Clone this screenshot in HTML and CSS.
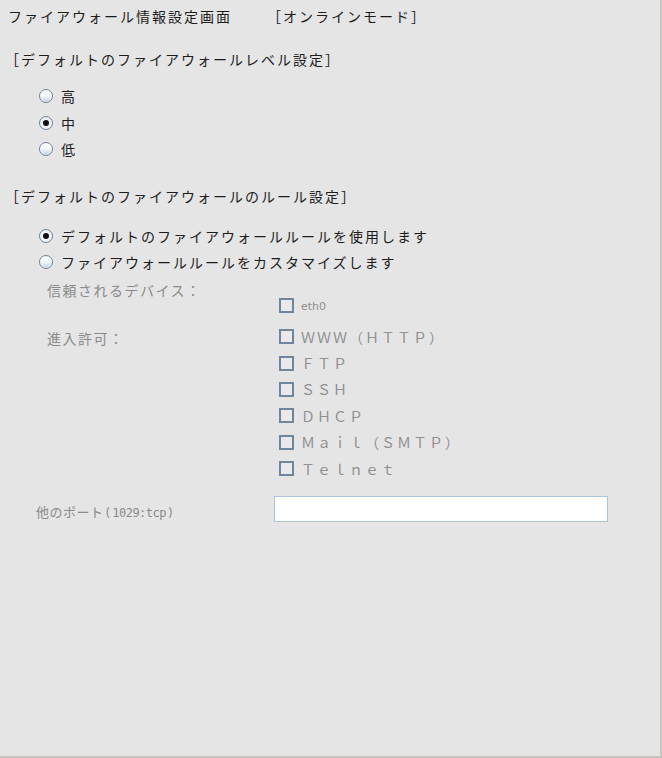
FILE: index.html
```html
<!DOCTYPE html>
<html lang="ja">
<head>
<meta charset="utf-8">
<title>ファイアウォール情報設定画面</title>
<link rel="stylesheet" href="styles.css">
</head>
<body>
<div class="panel">
  <div class="title"><span class="title-main">ファイアウォール情報設定画面</span><span class="mode">［オンラインモード］</span></div>

  <div class="section-head">［デフォルトのファイアウォールレベル設定］</div>
  <div class="radio-group level">
    <label class="radio-row"><span class="radio"></span><span class="radio-text">高</span></label>
    <label class="radio-row"><span class="radio checked"></span><span class="radio-text">中</span></label>
    <label class="radio-row"><span class="radio"></span><span class="radio-text">低</span></label>
  </div>

  <div class="section-head rules-head">［デフォルトのファイアウォールのルール設定］</div>
  <div class="radio-group rules">
    <label class="radio-row"><span class="radio checked"></span><span class="radio-text">デフォルトのファイアウォールルールを使用します</span></label>
    <label class="radio-row"><span class="radio"></span><span class="radio-text">ファイアウォールルールをカスタマイズします</span></label>
  </div>

  <div class="custom">
    <div class="field trust">
      <div class="field-label">信頼されるデバイス：</div>
      <div class="checks">
        <div class="check-row"><span class="checkbox"></span><span class="check-text small">eth0</span></div>
      </div>
    </div>
    <div class="field access">
      <div class="field-label">進入許可：</div>
      <div class="checks">
        <div class="check-row"><span class="checkbox"></span><span class="check-text">ＷＷＷ（ＨＴＴＰ）</span></div>
        <div class="check-row"><span class="checkbox"></span><span class="check-text">ＦＴＰ</span></div>
        <div class="check-row"><span class="checkbox"></span><span class="check-text">ＳＳＨ</span></div>
        <div class="check-row"><span class="checkbox"></span><span class="check-text">ＤＨＣＰ</span></div>
        <div class="check-row"><span class="checkbox"></span><span class="check-text">Ｍａｉｌ（ＳＭＴＰ）</span></div>
        <div class="check-row"><span class="checkbox"></span><span class="check-text">Ｔｅｌｎｅｔ</span></div>
      </div>
    </div>
    <div class="port">
      <div class="port-label">他のポート<span class="paren">(</span><span class="half">1029:tcp</span><span class="paren">)</span></div>
      <div class="port-input"></div>
    </div>
  </div>
</div>
</body>
</html>
```

FILE: styles.css
```css
html, body {
  margin: 0;
  padding: 0;
  background: #e5e5e5;
}

body {
  font-family: "Noto Sans CJK JP", "Noto Sans", sans-serif;
  font-size: 14px;
  color: #1c1c1c;
}

.panel {
  width: 660px;
  height: 756px;
  border-right: 2px solid #c9c6c1;
  border-bottom: 2px solid #c9c6c1;
  background: #e5e5e5;
  overflow: hidden;
}

.title {
  margin-top: 6px;
  padding-left: 8px;
  height: 20px;
  line-height: 20px;
  letter-spacing: 2px;
  white-space: nowrap;
  display: flex;
}

.title-main {
  width: 259px;
}

.section-head {
  padding-left: 5px;
  height: 20px;
  line-height: 20px;
  letter-spacing: 2px;
  white-space: nowrap;
  margin-top: 23px;
}

.rules-head {
  margin-top: 23px;
}

.radio-group {
  padding-left: 39px;
  display: flex;
  flex-direction: column;
}

.radio-group.level {
  margin-top: 14px;
}

.radio-group.rules {
  margin-top: 17px;
}

.radio-row {
  height: 26.5px;
  display: flex;
  align-items: center;
  white-space: nowrap;
}

.radio {
  width: 12px;
  height: 12px;
  border-radius: 50%;
  border: 1px solid #6f8299;
  background: linear-gradient(180deg, #f7f9fc 0%, #ffffff 35%, #e3ebf5 65%, #b7c9de 100%);
  box-shadow: inset 0 0 0 1px rgba(255, 255, 255, 0.6);
  position: relative;
  flex: none;
}

.radio.checked {
  background: radial-gradient(circle, #ffffff 0%, #e8eef6 60%, #b7c9de 100%);
}

.radio.checked::after {
  content: "";
  position: absolute;
  left: 3px;
  top: 3px;
  width: 6px;
  height: 6px;
  border-radius: 50%;
  background: #0e0e0e;
}

.radio-text {
  margin-left: 8px;
  letter-spacing: 2px;
}

.custom {
  color: #8a8a8a;
}

.field {
  display: grid;
  grid-template-columns: 232px 1fr;
  padding-left: 47px;
}

.field.trust {
  height: 43px;
}

.field.trust .field-label {
  margin-top: 1px;
}

.field.trust .checks {
  align-self: end;
}

.field.access {
  margin-top: 5px;
}

.field-label {
  height: 26px;
  line-height: 26px;
  letter-spacing: 1.5px;
  white-space: nowrap;
}

.field.access .field-label {
  margin-top: 1px;
}

.checks {
  display: flex;
  flex-direction: column;
}

.check-row {
  height: 26.4px;
  display: flex;
  align-items: center;
  white-space: nowrap;
}

.checkbox {
  width: 11px;
  height: 11px;
  border: 2px solid #71859b;
  background: #e8e9eb;
  flex: none;
}

.check-text {
  margin-left: 7px;
  letter-spacing: 2px;
  color: #8f8f8f;
}

.check-text.small {
  font-family: "DejaVu Sans", sans-serif;
  font-size: 11px;
  letter-spacing: 0;
  position: relative;
  top: 1px;
}

.port {
  margin-top: 14px;
  display: flex;
  align-items: flex-start;
  padding-left: 36px;
}

.port-label {
  width: 238px;
  height: 26px;
  line-height: 26px;
  padding-top: 3px;
  box-sizing: border-box;
  font-size: 13px;
  letter-spacing: 0.5px;
  white-space: nowrap;
}

.paren {
  font-family: "DejaVu Sans", sans-serif;
  font-size: 12px;
  letter-spacing: 0;
  margin: 0 2px;
}

.half {
  font-family: "DejaVu Sans Mono", monospace;
  font-size: 12px;
  letter-spacing: -0.5px;
}

.port-input {
  width: 332px;
  height: 24px;
  background: #ffffff;
  border: 1px solid #a9c2de;
}
```
